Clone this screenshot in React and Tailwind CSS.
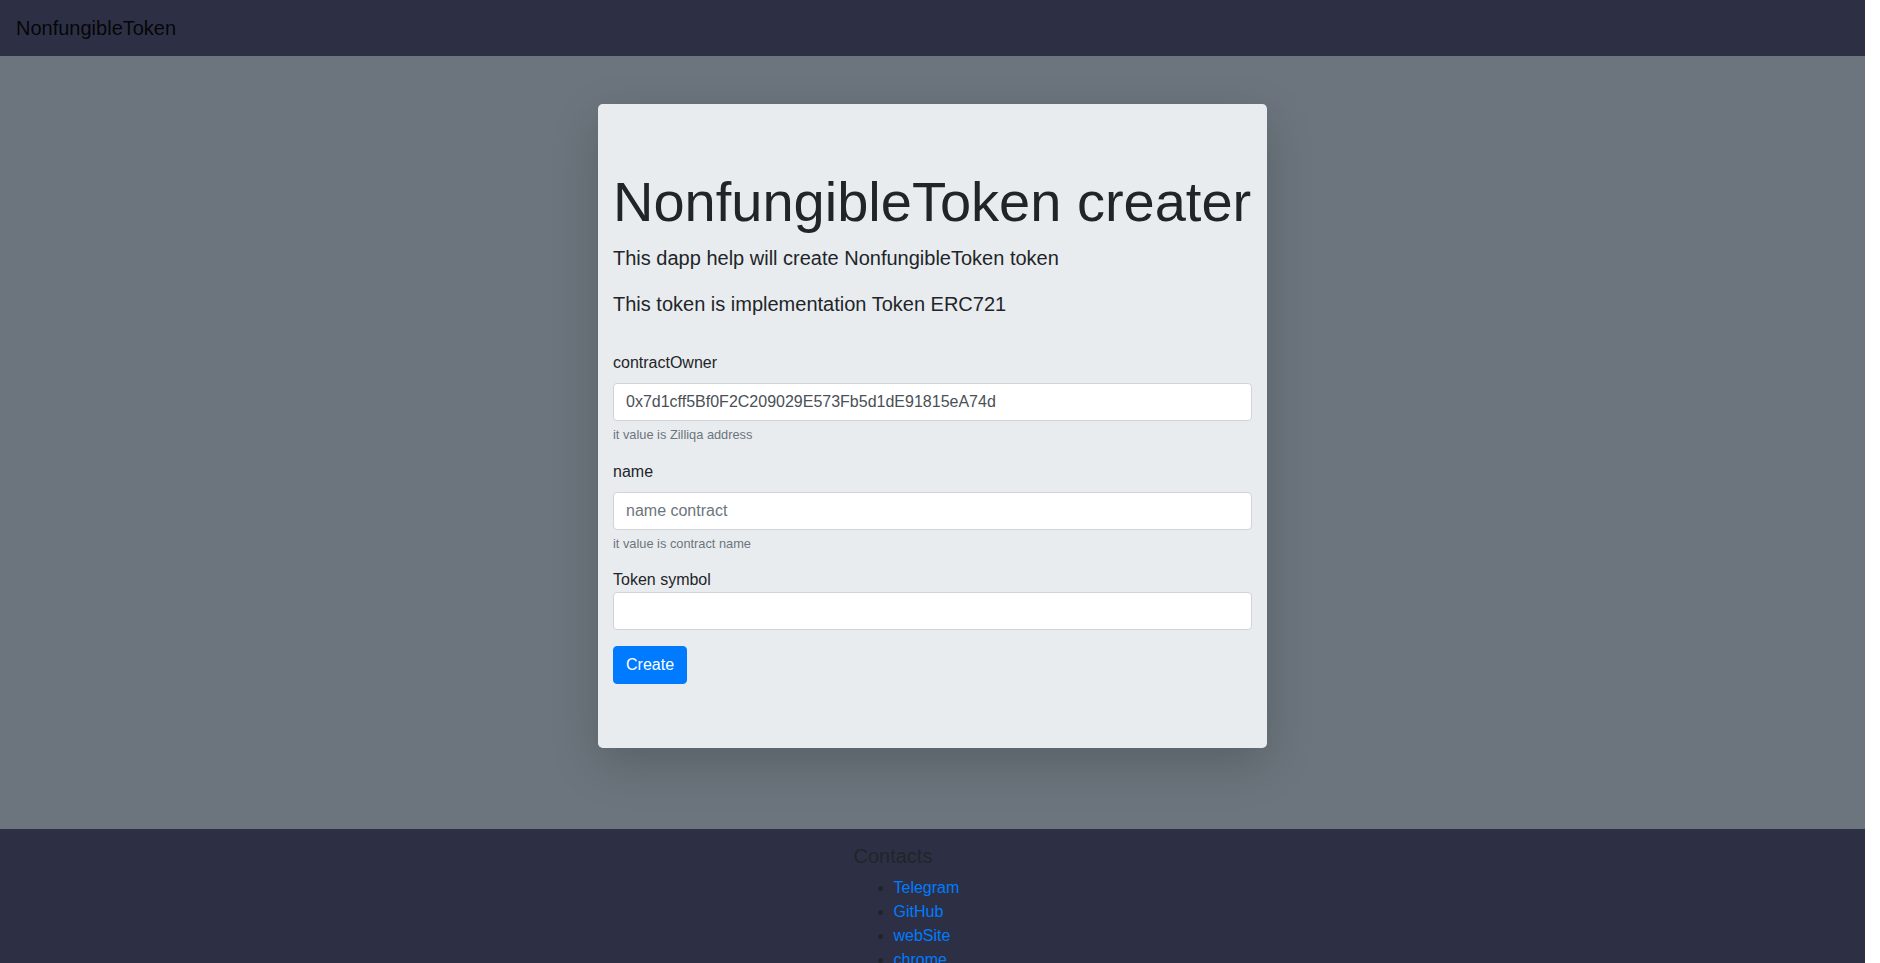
export default function App() {
  const font = { fontFamily: '"Liberation Sans", Arial, sans-serif' };
  return (
    <div className="flex h-[963px] w-full overflow-hidden bg-white" style={font}>
      <div className="flex w-[1865px] shrink-0 flex-col">
        <header className="flex h-[56px] shrink-0 items-center bg-[#2d3045] px-4">
          <span className="text-[20px] leading-[30px] text-black/90">NonfungibleToken</span>
        </header>
        <main className="flex h-[773px] shrink-0 justify-center bg-[#6c757d] pt-12">
          <div className="h-fit w-[669px] rounded-[4.8px] bg-[#e9ecef] px-[15px] pt-16 pb-16 text-[#212529] shadow-[0_1rem_3rem_rgba(0,0,0,0.175)]">
            <h1 className="mb-2 text-[56px] leading-[1.2] font-light">NonfungibleToken creater</h1>
            <p className="mb-4 text-[20px] leading-[30px] font-light">This dapp help will create NonfungibleToken token</p>
            <p className="mb-4 text-[20px] leading-[30px] font-light">This token is implementation Token ERC721</p>
            <form className="pt-4" onSubmit={(e) => e.preventDefault()}>
              <div className="mb-4">
                <label className="mb-2 block text-[16px] leading-6">contractOwner</label>
                <input
                  className="block h-[38px] w-full rounded-[4px] border border-[#ced4da] bg-white px-3 text-[16px] text-[#495057] outline-none"
                  defaultValue="0x7d1cff5Bf0F2C209029E573Fb5d1dE91815eA74d"
                />
                <small className="mt-1 block text-[12.8px] leading-[19.2px] text-[#6c757d]">it value is Zilliqa address</small>
              </div>
              <div className="mb-[14px]">
                <label className="mb-2 block text-[16px] leading-6">name</label>
                <input
                  className="block h-[38px] w-full rounded-[4px] border border-[#ced4da] bg-white px-3 text-[16px] text-[#495057] outline-none placeholder:text-[#6c757d]"
                  placeholder="name contract"
                />
                <small className="mt-1 block text-[12.8px] leading-[19.2px] text-[#6c757d]">it value is contract name</small>
              </div>
              <div className="mb-4">
                <label className="block text-[16px] leading-6">Token symbol</label>
                <input className="block h-[38px] w-full rounded-[4px] border border-[#ced4da] bg-white px-3 text-[16px] text-[#495057] outline-none" />
              </div>
              <button
                type="submit"
                className="h-[38px] rounded-[4px] border border-[#007bff] bg-[#007bff] px-3 text-[16px] leading-6 text-white"
              >
                Create
              </button>
            </form>
          </div>
        </main>
        <footer className="flex h-[134px] shrink-0 justify-center bg-[#2d3045] pt-[15px]">
          <div className="w-[158px]">
            <h5 className="text-[20px] leading-[24px] text-[#212529]">Contacts</h5>
            <ul className="mt-2 list-disc pl-10 text-[16px] leading-6 text-[#212529]">
              <li><a href="#" className="text-[#007bff]">Telegram</a></li>
              <li><a href="#" className="text-[#007bff]">GitHub</a></li>
              <li><a href="#" className="text-[#007bff]">webSite</a></li>
              <li><a href="#" className="text-[#007bff]">chrome</a></li>
            </ul>
          </div>
        </footer>
      </div>
    </div>
  );
}
